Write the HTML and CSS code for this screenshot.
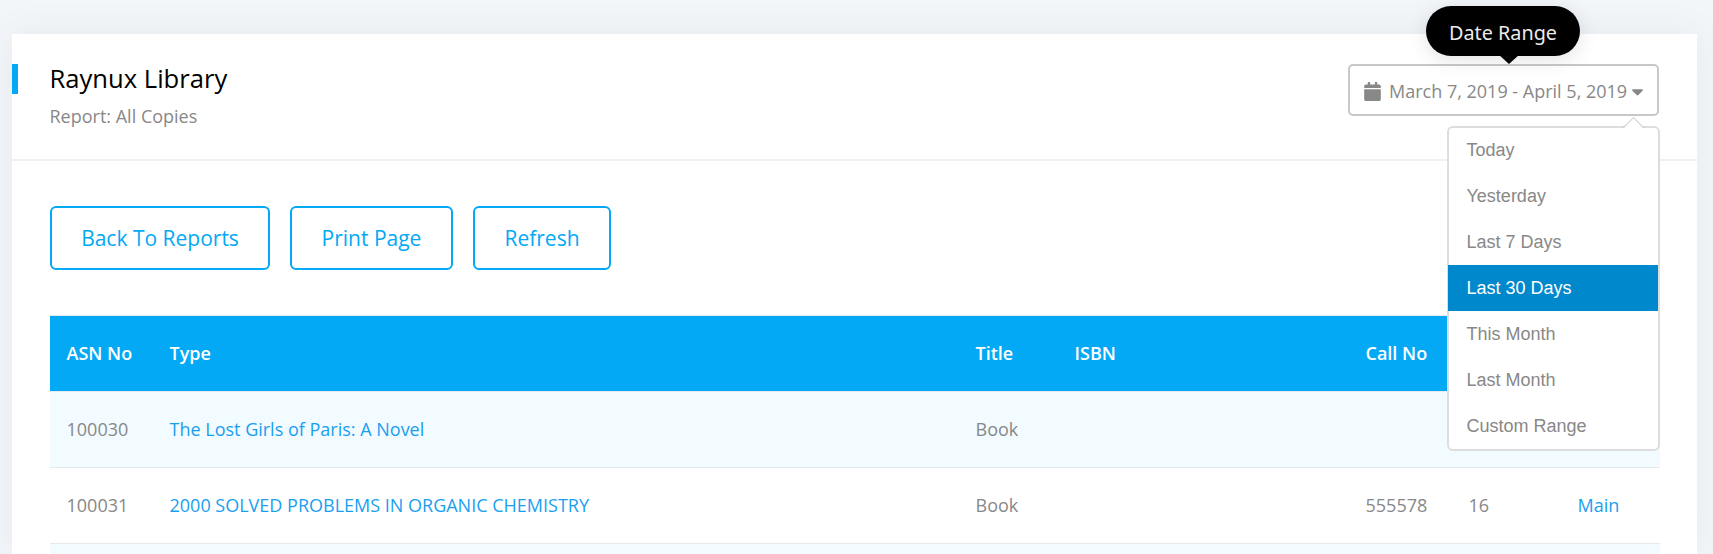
FILE: index.html
```
<!DOCTYPE html>
<html lang="en">
<head>
<meta charset="utf-8">
<title>Raynux Library</title>
<link rel="stylesheet" href="styles.css">
</head>
<body>
<main class="card">
  <header class="card-head">
    <div class="heading">
      <h1 class="title">Raynux Library</h1>
      <p class="subtitle">Report: All Copies</p>
    </div>
    <div class="range">
      <button class="range-button" type="button">
        <svg class="calendar" viewBox="0 0 448 512"><path d="M12 192h424c6.600 0 12 5.400 12 12v260c0 26.500-21.500 48-48 48H48c-26.500 0-48-21.500-48-48V204c0-6.600 5.400-12 12-12zm436-44v-36c0-26.500-21.500-48-48-48h-48V12c0-6.600-5.400-12-12-12h-40c-6.600 0-12 5.400-12 12v52H160V12c0-6.600-5.400-12-12-12h-40c-6.600 0-12 5.400-12 12v52H48C21.500 64 0 85.500 0 112v36c0 6.600 5.400 12 12 12h424c6.600 0 12-5.400 12-12z"/></svg>
        <span class="range-text">March 7, 2019 - April 5, 2019</span>
        <svg class="caret" viewBox="0 0 12 7"><path d="M1 0h10c.8 0 1.200.9.600 1.500L6.600 6.600a.9.900 0 0 1-1.200 0L.4 1.500C-.2.900.2 0 1 0z"/></svg>
      </button>
      <div class="tooltip">Date Range</div>
      <ul class="menu">
        <li class="menu-item">Today</li>
        <li class="menu-item">Yesterday</li>
        <li class="menu-item">Last 7 Days</li>
        <li class="menu-item active">Last 30 Days</li>
        <li class="menu-item">This Month</li>
        <li class="menu-item">Last Month</li>
        <li class="menu-item">Custom Range</li>
      </ul>
    </div>
  </header>
  <section class="card-body">
    <div class="actions">
      <button class="btn btn-back" type="button">Back To Reports</button>
      <button class="btn btn-print" type="button">Print Page</button>
      <button class="btn btn-refresh" type="button">Refresh</button>
    </div>
    <table class="copies">
      <colgroup><col class="c-asn"><col class="c-type"><col class="c-title"><col class="c-isbn"><col class="c-call"><col class="c-num"><col class="c-loc"></colgroup>
      <thead>
        <tr><th>ASN No</th><th>Type</th><th>Title</th><th>ISBN</th><th>Call No</th><th></th><th></th></tr>
      </thead>
      <tbody>
        <tr><td>100030</td><td><a>The Lost Girls of Paris: A Novel</a></td><td>Book</td><td></td><td></td><td></td><td></td></tr>
        <tr><td>100031</td><td><a>2000 SOLVED PROBLEMS IN ORGANIC CHEMISTRY</a></td><td>Book</td><td></td><td>555578</td><td>16</td><td><a>Main</a></td></tr>
        <tr class="cut"><td></td><td></td><td></td><td></td><td></td><td></td><td></td></tr>
      </tbody>
    </table>
  </section>
</main>
</body>
</html>
```
FILE: styles.css
```
* { box-sizing: border-box; }
body {
  margin: 0;
  height: 554px;
  overflow: hidden;
  padding: 34px 16px 0 12px;
  background: #f2f6f9;
  color: #888;
  font: 18px/28px "Open Sans", sans-serif;
}
.card {
  height: 520px;
  background: #fff;
  box-shadow: 0 0 36px rgba(69, 75, 82, .07);
}
.card-head {
  display: flex;
  justify-content: space-between;
  align-items: flex-start;
  height: 127px;
  padding: 30px 38px 0 0;
  border-bottom: 2px solid #f0f0f0;
}
.heading { padding-left: 31.5px; border-left: 6px solid #03a9f4; height: 30px; }
.title { margin: 0; font-size: 25.6px; line-height: 30px; font-weight: 400; color: #000; }
.subtitle { margin: 8px 0 0; line-height: 28px; }
.range { position: relative; }
.range-button {
  display: flex;
  align-items: center;
  width: 311px;
  height: 52px;
  padding: 2px 0 0 14px;
  border: 2px solid #c8c8c8;
  border-radius: 5px;
  background: #fff;
  color: #888;
  font: inherit;
}
.calendar { width: 17px; height: 19px; margin: 0 8px 0 0; fill: #888; }
.range-text { white-space: nowrap; }
.caret { width: 11px; height: 7px; margin: 2px 0 0 4.5px; fill: #888; }
.tooltip {
  position: absolute;
  z-index: 2;
  left: 78px;
  top: -58px;
  width: 154px;
  height: 50px;
  border-radius: 25px;
  background: #000;
  color: #ebebeb;
  text-align: center;
  font: 19.800px/53px "Noto Sans", sans-serif;
  box-shadow: 0 4px 18px rgba(69, 65, 78, .15);
}
.tooltip::after {
  content: "";
  position: absolute;
  left: 72px;
  top: 48px;
  border: 11px solid transparent;
  border-width: 10px 11px 0;
  border-top-color: #000;
}
.menu {
  position: absolute;
  z-index: 1;
  right: -1px;
  top: 62px;
  width: 213px;
  margin: 0;
  padding: 0;
  list-style: none;
  border: 2px solid #ddd;
  border-radius: 6px;
  background: #fff;
  font: 18px/46px "Liberation Sans", sans-serif;
}
.menu::before {
  content: "";
  position: absolute;
  right: 17px;
  top: -8px;
  width: 14px;
  height: 14px;
  border: solid #ccc;
  border-width: 1px 0 0 1px;
  background: linear-gradient(135deg, #fff 50%, transparent 50%);
  transform: rotate(45deg);
}
.menu-item { height: 46px; padding-left: 17.5px; }
.menu-item:first-child { margin-top: -1px; }
.active { margin: 0 0 0 -1px; padding-left: 18.5px; background: #08c; color: #fff; }
.card-body { padding: 45px 37px 0 38px; }
.actions { display: flex; gap: 20px; }
.btn {
  height: 64px;
  padding: 0;
  border: 2px solid #03a9f4;
  border-radius: 6px;
  background: #fff;
  color: #03a9f4;
  font: 21px/28px "Open Sans", sans-serif;
}
.btn-back { width: 220px; }
.btn-print { width: 163px; }
.btn-refresh { width: 138px; }
.copies {
  width: 1610px;
  margin-top: 45px;
  border-collapse: separate;
  border-spacing: 0;
  table-layout: fixed;
}
.copies th, .copies td {
  height: 76px;
  padding: 0 10px 2px 16.500px;
  border-top: 1px solid #e6e9ee;
  text-align: left;
  white-space: nowrap;
}
.copies .cut td { height: 11px; padding: 0; }
.copies th { background: #03a9f4; color: #fff; font-weight: 600; background-clip: padding-box; }
.copies tbody tr:nth-child(odd) { background: #f2fbff; }
.copies a { color: #1a9ff0; }
.c-asn { width: 103px; }
.c-type { width: 806px; }
.c-title { width: 99px; }
.c-isbn { width: 291px; }
.c-call { width: 103px; }
.c-num { width: 109px; }
```
